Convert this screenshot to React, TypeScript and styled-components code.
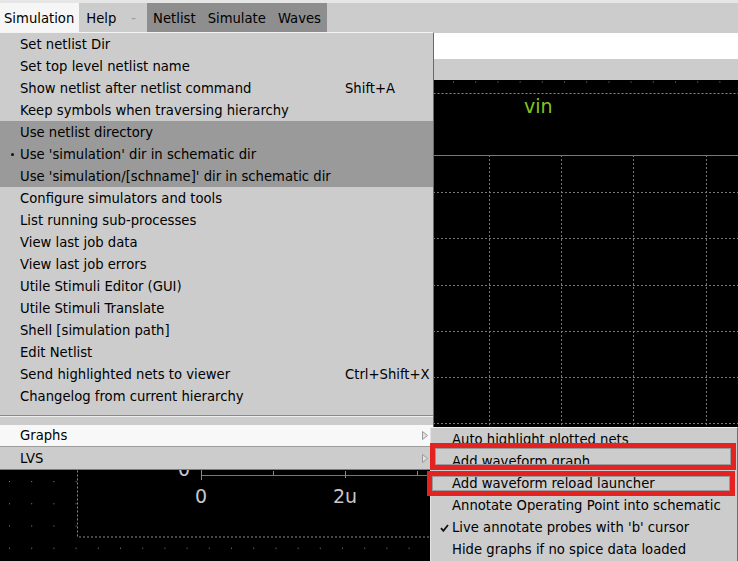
import React from 'react'
import styled, { createGlobalStyle } from 'styled-components'

const GlobalStyle = createGlobalStyle`
  body {
    margin: 0;
    font-family: 'DejaVu Sans', 'Liberation Sans', sans-serif;
  }
`

type Row = { label: string; shortcut?: string; tone?: 'group'; radio?: boolean }

const mainItems: Row[] = [
  { label: 'Set netlist Dir' },
  { label: 'Set top level netlist name' },
  { label: 'Show netlist after netlist command', shortcut: 'Shift+A' },
  { label: 'Keep symbols when traversing hierarchy' },
  { label: 'Use netlist directory', tone: 'group' },
  { label: "Use 'simulation' dir in schematic dir", tone: 'group', radio: true },
  { label: "Use 'simulation/[schname]' dir in schematic dir", tone: 'group' },
  { label: 'Configure simulators and tools' },
  { label: 'List running sub-processes' },
  { label: 'View last job data' },
  { label: 'View last job errors' },
  { label: 'Utile Stimuli Editor (GUI)' },
  { label: 'Utile Stimuli Translate' },
  { label: 'Shell [simulation path]' },
  { label: 'Edit Netlist' },
  { label: 'Send highlighted nets to viewer', shortcut: 'Ctrl+Shift+X' },
  { label: 'Changelog from current hierarchy' },
]

const graphItems = [
  { label: 'Auto highlight plotted nets' },
  { label: 'Add waveform graph' },
  { label: 'Add waveform reload launcher' },
  { label: 'Annotate Operating Point into schematic' },
  { label: "Live annotate probes with 'b' cursor", checked: true },
  { label: 'Hide graphs if no spice data loaded' },
]

const hLines = [112, 158, 205, 251, 297, 343, 389]
const vLines = [273, 345, 417, 489, 561, 633, 706]

const SubArrow = () => (
  <ArrowIcon width="6" height="9" viewBox="0 0 6 9">
    <path d="M0.5 0.5 L5.5 4.5 L0.5 8.5 Z" fill="#e2e2e2" stroke="#9a9a9a" strokeWidth="1" />
  </ArrowIcon>
)

const CheckMark = () => (
  <CheckIcon width="9" height="8" viewBox="0 0 9 8">
    <path d="M1 4.2 L3.4 6.8 L8 1" fill="none" stroke="#111" strokeWidth="1.8" />
  </CheckIcon>
)

const WaveCanvas = () => (
  <svg width="738" height="481" style={{ display: 'block' }}>
    <defs>
      <pattern id="dots" x="9" y="1.5" width="22.2" height="22.2" patternUnits="userSpaceOnUse">
        <rect width="1" height="1" fill="#8a8a8a" />
      </pattern>
    </defs>
    <rect width="738" height="481" fill="url(#dots)" />
    <rect x="77.5" y="13.5" width="700" height="443.5" fill="#000" stroke="#8a8a8a" strokeDasharray="2 2" />
    <text x="524" y="33" fontSize="19" fill="#84c520" fontFamily="DejaVu Sans">vin</text>
    {hLines.map((y) => (
      <line key={y} x1="201" x2="738" y1={y + 0.5} y2={y + 0.5} stroke="#777" strokeDasharray="2 2" />
    ))}
    {vLines.map((x) => (
      <line key={x} x1={x + 0.5} x2={x + 0.5} y1="75" y2="395" stroke="#777" strokeDasharray="2 2" />
    ))}
    <rect x="201.5" y="75.5" width="600" height="320" fill="none" stroke="#777" />
    <line x1="201.5" x2="201.5" y1="391" y2="400" stroke="#888" />
    <line x1="273.5" x2="273.5" y1="391" y2="395" stroke="#888" />
    <line x1="345.5" x2="345.5" y1="391" y2="398" stroke="#888" />
    <line x1="417.5" x2="417.5" y1="391" y2="395" stroke="#888" />
    <text x="184" y="396" fontSize="19" fill="#c8c8c8" textAnchor="middle" fontFamily="DejaVu Sans">0</text>
    <text x="201" y="423" fontSize="19" fill="#c8c8c8" textAnchor="middle" fontFamily="DejaVu Sans">0</text>
    <text x="345" y="423" fontSize="19" fill="#c8c8c8" textAnchor="middle" fontFamily="DejaVu Sans">2u</text>
  </svg>
)

const App = () => {
  return (
    <Window>
      <GlobalStyle />
      <TopStrip />
      <MenuBar>
        <MenuButton $active $pad="0 5px 0 4px">Simulation</MenuButton>
        <MenuButton $pad="0 7px">Help</MenuButton>
        <MenuButton $pad="0 11px 0 8px" $disabled>-</MenuButton>
        <ToolGroup>
          <MenuButton $pad="0 6px">Netlist</MenuButton>
          <MenuButton $pad="0 6px">Simulate</MenuButton>
          <MenuButton $pad="0 6px">Waves</MenuButton>
        </ToolGroup>
      </MenuBar>
      <EntryBar />
      <TabBar />
      <Canvas>
        <WaveCanvas />
      </Canvas>

      <Dropdown>
        {mainItems.map((item) => (
          <Item key={item.label} $tone={item.tone}>
            {item.radio && <Bullet />}
            <span>{item.label}</span>
            {item.shortcut && <span>{item.shortcut}</span>}
          </Item>
        ))}
        <Separator />
        <CascadeItem $open>
          <span>Graphs</span>
          <SubArrow />
        </CascadeItem>
        <CascadeItem>
          <span>LVS</span>
          <SubArrow />
        </CascadeItem>
      </Dropdown>

      <Submenu>
        {graphItems.map((item) => (
          <SubItem key={item.label}>
            {item.checked && <CheckMark />}
            {item.label}
          </SubItem>
        ))}
      </Submenu>

      <Callout style={{ left: 430, top: 443, width: 306, height: 27 }} />
      <Callout style={{ left: 427, top: 471, width: 308, height: 25 }} />
    </Window>
  )
}

const Window = styled.div`
  position: relative;
  display: flex;
  flex-direction: column;

  width: 738px;
  height: 561px;
  overflow: hidden;

  background: #cccccc;
  color: #000;
  font-size: 13.2px;
`

const TopStrip = styled.div`
  height: 3px;
  background: #e6e6e6;
`

const MenuBar = styled.div`
  display: flex;
  align-items: stretch;

  height: 30px;
  background: #cccccc;
`

const MenuButton = styled.div<{ $active?: boolean; $disabled?: boolean; $pad: string }>`
  display: flex;
  align-items: center;

  padding: ${(p) => p.$pad};

  background: ${(p) => (p.$active ? '#f6f6f6' : 'transparent')};
  color: ${(p) => (p.$disabled ? '#9c9c9c' : '#000')};
  white-space: nowrap;
`

const ToolGroup = styled.div`
  display: flex;
  background: #8e8e8e;
`

const EntryBar = styled.div`
  height: 26px;
  background: #ffffff;
`

const TabBar = styled.div`
  height: 21px;
  background: #cccccc;
`

const Canvas = styled.div`
  flex: 1;
  background: #000;
`

const Dropdown = styled.div`
  position: absolute;
  top: 32px;
  left: 0;

  width: 433px;

  background: #cccccc;
  border-top: 1px solid #f4f4f4;
  border-right: 1px solid #6a6a6a;
  border-bottom: 1px solid #7c7c7c;
`

const Item = styled.div<{ $tone?: 'group' }>`
  position: relative;
  display: grid;
  grid-template-columns: 325px auto;
  align-items: center;

  height: 22px;
  padding-left: 20px;

  background: ${(p) => (p.$tone === 'group' ? '#9a9a9a' : 'transparent')};
  white-space: nowrap;
`

const Bullet = styled.span`
  position: absolute;
  left: 11px;
  top: 10px;

  width: 3px;
  height: 3px;
  border-radius: 50%;
  background: #111;
`

const Separator = styled.div`
  height: 18px;
  box-sizing: border-box;
  padding-top: 8px;

  &::after {
    content: '';
    display: block;
    height: 1px;
    background: #8a8a8a;
    border-bottom: 1px solid #efefef;
  }
`

const CascadeItem = styled.div<{ $open?: boolean }>`
  display: flex;
  align-items: center;
  justify-content: space-between;

  height: 22px;
  box-sizing: border-box;
  padding: 0 5px 0 20px;

  background: ${(p) => (p.$open ? '#f8f8f8' : '#cccccc')};
  border-bottom: ${(p) => (p.$open ? '1px solid #9c9c9c' : 'none')};
`

const ArrowIcon = styled.svg`
  display: block;
`

const Submenu = styled.div`
  position: absolute;
  top: 427px;
  left: 430px;

  width: 306px;
  height: 134px;

  background: #cccccc;
  border-top: 1px solid #f0f0f0;
  border-left: 1px solid #e4e4e4;
  border-right: 1px solid #6e6e6e;
`

const SubItem = styled.div`
  position: relative;
  display: flex;
  align-items: center;

  height: 22px;
  padding-left: 21px;

  white-space: nowrap;
`

const CheckIcon = styled.svg`
  position: absolute;
  left: 9px;
  top: 8px;
`

const Callout = styled.div`
  position: absolute;
  box-sizing: border-box;

  border: 5px solid #e42222;
  box-shadow: inset 0 0 0 1px #9a9a9a;
`

export default App
